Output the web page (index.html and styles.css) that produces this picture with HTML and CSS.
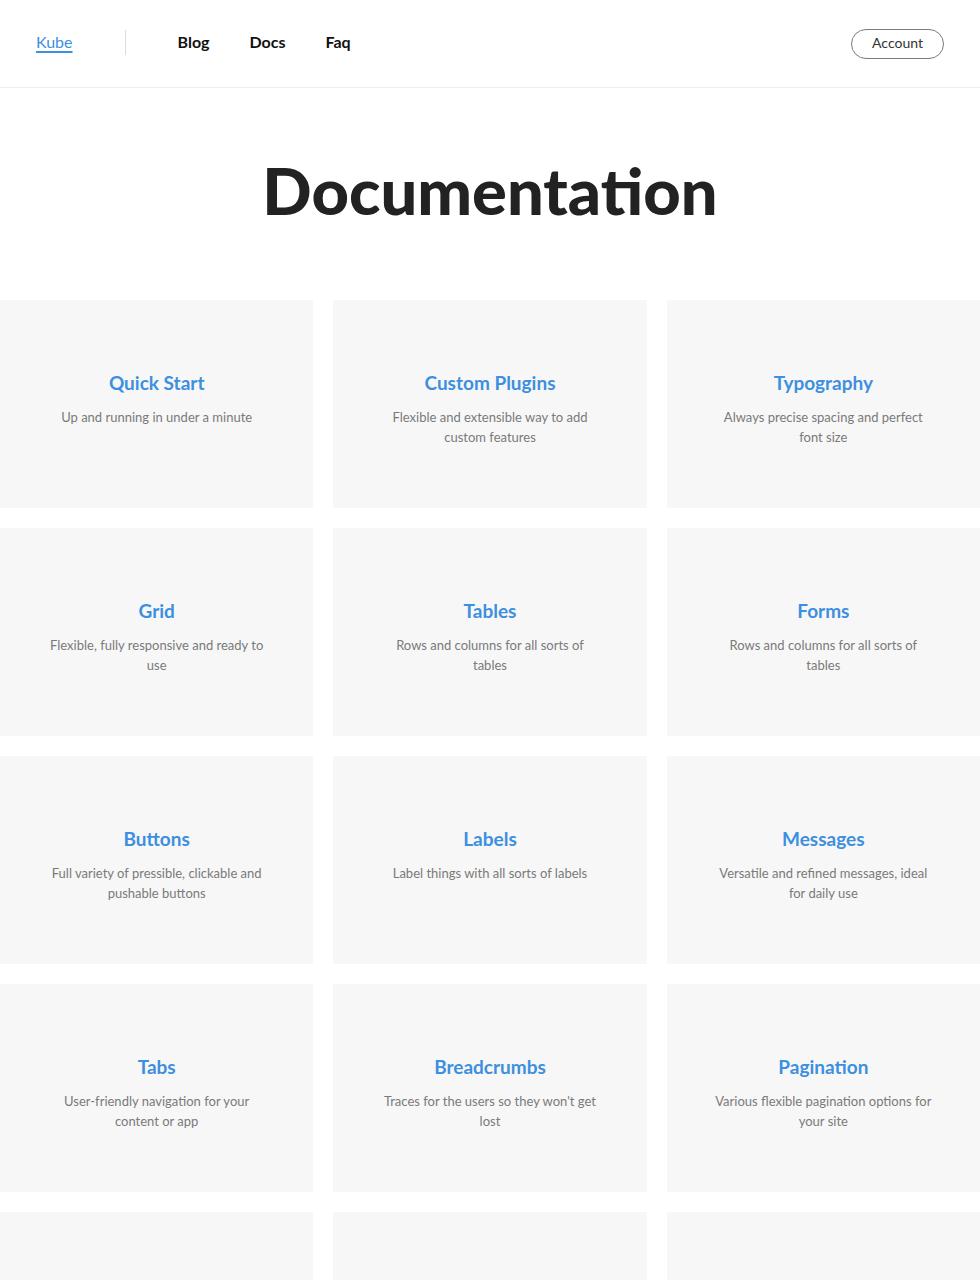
FILE: index.html
```html
<!DOCTYPE html>
<html lang="en">
<head>
<meta charset="utf-8">
<title>Documentation</title>
<link rel="stylesheet" href="styles.css">
</head>
<body>
<header class="header">
  <a class="logo" href="#">Kube</a>
  <span class="sep"></span>
  <nav class="nav">
    <a href="#">Blog</a>
    <a href="#">Docs</a>
    <a href="#">Faq</a>
  </nav>
  <a class="account" href="#">Account</a>
</header>
<section class="hero">
  <h1>Documentation</h1>
</section>
<main class="grid">
  <div class="card"><h2>Quick Start</h2><p>Up and running in under a minute</p></div>
  <div class="card"><h2>Custom Plugins</h2><p>Flexible and extensible way to add custom features</p></div>
  <div class="card"><h2>Typography</h2><p>Always precise spacing and perfect font size</p></div>
  <div class="card"><h2>Grid</h2><p>Flexible, fully responsive and ready to use</p></div>
  <div class="card"><h2>Tables</h2><p>Rows and columns for all sorts of tables</p></div>
  <div class="card"><h2>Forms</h2><p>Rows and columns for all sorts of tables</p></div>
  <div class="card"><h2>Buttons</h2><p>Full variety of pressible, clickable and pushable buttons</p></div>
  <div class="card"><h2>Labels</h2><p>Label things with all sorts of labels</p></div>
  <div class="card"><h2>Messages</h2><p>Versatile and refined messages, ideal for daily use</p></div>
  <div class="card"><h2>Tabs</h2><p>User-friendly navigation for your content or app</p></div>
  <div class="card"><h2>Breadcrumbs</h2><p>Traces for the users so they won't get lost</p></div>
  <div class="card"><h2>Pagination</h2><p>Various flexible pagination options for your site</p></div>
  <div class="card"></div>
  <div class="card"></div>
  <div class="card"></div>
</main>
</body>
</html>
```

FILE: styles.css
```css
* { box-sizing: border-box; }
body {
  margin: 0;
  font-family: Lato, "Open Sans", "Liberation Sans", sans-serif;
  color: #222;
  background: #fff;
}
.header {
  display: flex;
  align-items: center;
  height: 88px;
  padding: 0 36px;
  border-bottom: 1px solid #eee;
}
.logo {
  color: #3d8fdf;
  font-size: 16px;
  text-decoration: underline;
  text-decoration-thickness: 2px;
  text-underline-offset: 3px;
  margin-bottom: 4px;
}
.sep {
  width: 1px;
  height: 25px;
  background: #dcdcdc;
  margin: 0 52px 2px;
}
.nav {
  display: flex;
  gap: 40px;
  flex: 1;
  margin-bottom: 4px;
}
.nav a {
  color: #111;
  font-weight: 700;
  font-size: 16px;
  text-decoration: none;
}
.account {
  display: inline-flex;
  align-items: center;
  justify-content: center;
  width: 93px;
  height: 30px;
  border: 1px solid #7a7a7a;
  border-radius: 16px;
  font-size: 14px;
  color: #333;
  text-decoration: none;
  padding-bottom: 2px;
}
.hero {
  padding: 62px 0 70px;
  text-align: center;
}
.hero h1 {
  margin: 0;
  font-size: 65px;
  line-height: 80px;
  font-weight: 900;
  color: #222;
}
.grid {
  display: grid;
  grid-template-columns: repeat(3, 1fr);
  gap: 20px;
}
.card {
  background: #f7f7f7;
  height: 208px;
  padding: 69px 20px 0;
  text-align: center;
}
.card h2 {
  margin: 0 0 10px;
  font-size: 19px;
  line-height: 28px;
  font-weight: 700;
  color: #3d8fdf;
}
.card p {
  margin: 0 auto;
  max-width: 222px;
  font-size: 13px;
  line-height: 20px;
  color: #7a7a7a;
}
```
